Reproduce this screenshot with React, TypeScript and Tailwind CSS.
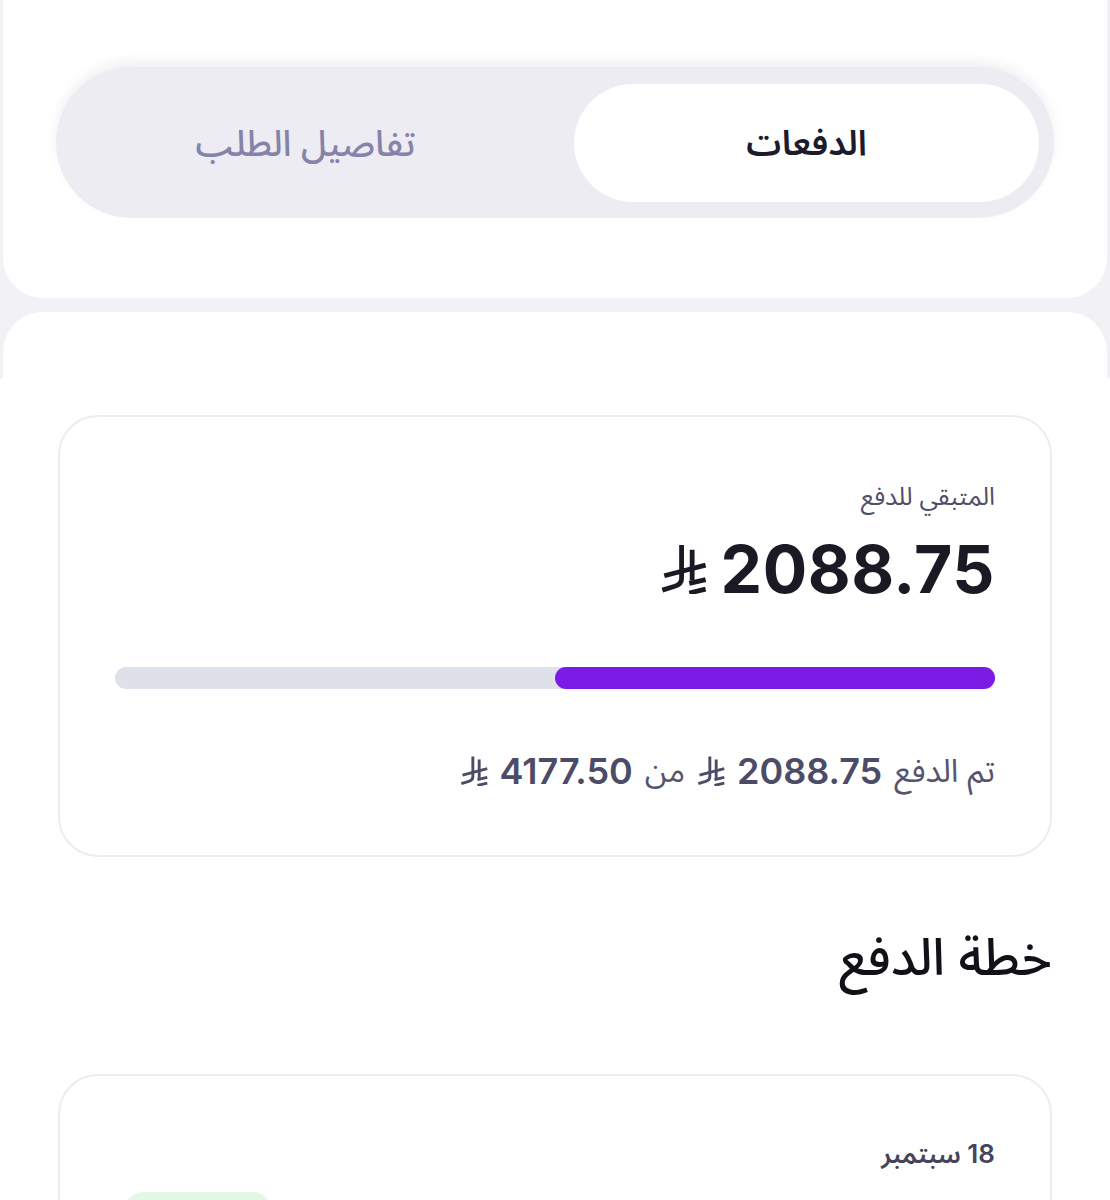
const font = "font-['Inter','Noto_Sans_Arabic','DejaVu_Sans',sans-serif]";

const Riyal = ({ className }: { className?: string }) => (
  <svg viewBox="0 0 48 52" className={className} fill="none" stroke="currentColor" strokeWidth="5" strokeLinecap="butt">
    {/* left stroke with curved foot */}
    <path d="M22 1 V36 Q22 42 15 44 L2 48" />
    {/* right stroke */}
    <path d="M33 6 V38" />
    {/* middle bar */}
    <path d="M4 33 L47 22" />
    {/* lower bars */}
    <path d="M30 41 L47 37" />
    <path d="M30 51 L47 47" />
  </svg>
);

const App = () => {
  return (
    <div dir="rtl" className={`min-h-[1400px] bg-[#f2f2f6] ${font}`}>
      {/* Tabs header */}
      <header className="mx-[3px] h-[298px] rounded-b-[40px] bg-white px-[53px] pt-[67px]">
        <div className="flex h-[151px] items-center rounded-full bg-[#ececf2] px-[15px] shadow-[0_-6px_10px_rgba(230,230,238,0.5)]">
          <button className="flex h-[118px] w-[465px] items-center justify-center rounded-full bg-white text-[35px] font-semibold text-[#1c1b2e]">
            الدفعات
          </button>
          <button className="flex h-[118px] flex-1 items-center justify-center pr-[34px] text-[36px] font-medium text-[#8683aa]">
            تفاصيل الطلب
          </button>
        </div>
      </header>

      {/* Top edge of content sheet */}
      <div className="mx-[3px] mt-[14px] h-[66px] rounded-t-[40px] bg-white" />

      <main className="bg-white px-[58px] pt-[37px] pb-[200px]">
        {/* Remaining balance card */}
        <section className="rounded-[40px] border-2 border-[#ececf1] px-[55px] pt-[64px] pb-[64px]">
          <div className="text-[25px] leading-[30px] text-[#4f4e66]">المتبقي للدفع</div>
          <div className="mt-[18px] flex items-center gap-[14px] text-[#1a1a24]">
            <span className="text-[66px] font-bold leading-[80px] tracking-[0.5px]">2088.75</span>
            <Riyal className="h-[50px] w-[47px]" />
          </div>

          <div className="mt-[58px] h-[22px] rounded-full bg-[#dfe1ea]">
            <div className="h-full w-1/2 rounded-full bg-[#7a1ce6]" />
          </div>

          <div className="mt-[62px] flex items-center gap-[12px] text-[32px] leading-[40px] text-[#55546f]">
            <span>تم الدفع</span>
            <span className="text-[36px] font-semibold text-[#4c4b68]">2088.75</span>
            <Riyal className="h-[30px] w-[28px] text-[#4c4b68]" />
            <span>من</span>
            <span className="text-[36px] font-semibold text-[#4c4b68]">4177.50</span>
            <Riyal className="h-[30px] w-[28px] text-[#4c4b68]" />
          </div>
        </section>

        <h2 className="mt-[70px] text-[51px] font-medium leading-[60px] text-[#111118]">خطة الدفع</h2>

        {/* Installment card */}
        <section className="mt-[87px] rounded-[40px] border-2 border-[#ececf1] px-[55px] pt-[62px] pb-[60px]">
          <div className="text-[26px] font-semibold leading-[32px] text-[#45445c]">18 سبتمبر</div>
          <div className="mt-[22px] flex items-start justify-between">
            <span className="pt-[24px] text-[30px] font-semibold text-[#1a1a24]">2088.75</span>
            <span className="ml-[10px] w-[146px] rounded-[18px] bg-[#e4f8e8] pt-[14px] pb-[10px] text-center text-[22px] text-[#1d9a3c]">مدفوع</span>
          </div>
        </section>
      </main>
    </div>
  );
};

export default App;
